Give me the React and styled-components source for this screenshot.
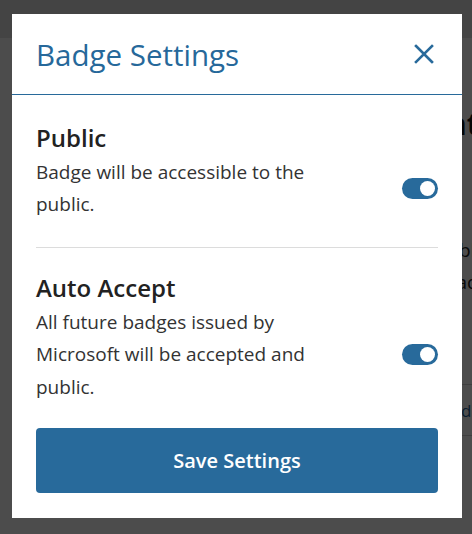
import React, { useState } from 'react'
import styled, { createGlobalStyle } from 'styled-components'

const GlobalStyle = createGlobalStyle`
  html, body {
    margin: 0;
    padding: 0;
    height: 100%;
    overflow: hidden;
    background: #ffffff;
    font-family: "Open Sans", "Noto Sans", Arial, sans-serif;
  }
`;

function Toggle({ on, onChange }) {
  return (
    <Switch type='button' role='switch' aria-checked={on} $on={on} onClick={onChange}>
      <Knob $on={on} />
    </Switch>
  )
}

function SettingItem({ title, text, on, onChange }) {
  return (
    <Item>
      <ItemTitle>{title}</ItemTitle>
      <ItemRow>
        <ItemText>{text}</ItemText>
        <Toggle on={on} onChange={onChange} />
      </ItemRow>
    </Item>
  )
}

function App() {
  const [isPublic, setPublic] = useState(true)
  const [autoAccept, setAutoAccept] = useState(true)

  return (
    <>
      <GlobalStyle />

      {/* page behind the dialog */}
      <Page>
        <TopBar />
        <PageMain>
          <PageHeading>Microsoft Learn achievements and badges earned at all</PageHeading>
          <PageText>Badges you earn are shown here and are available to share with</PageText>
          <PageText>everyone that you choose, and you can download and share them all</PageText>
          <PageTable>
            <PageCell>Issued by Microsoft and shared</PageCell>
          </PageTable>
        </PageMain>
      </Page>

      <Overlay>
        <Dialog role='dialog' aria-labelledby='badge-settings-title'>
          <Header>
            <Title id='badge-settings-title'>Badge Settings</Title>
            <CloseButton type='button' aria-label='Close'>
              <svg width='20' height='20' viewBox='0 0 20 20' fill='none'>
                <path d='M2 2 L18 18 M18 2 L2 18' stroke='currentColor' strokeWidth='2.6' strokeLinecap='square' />
              </svg>
            </CloseButton>
          </Header>

          <Body>
            <SettingItem
              title='Public'
              text='Badge will be accessible to the public.'
              on={isPublic}
              onChange={() => setPublic(!isPublic)}
            />
            <Divider />
            <SettingItem
              title='Auto Accept'
              text='All future badges issued by Microsoft will be accepted and public.'
              on={autoAccept}
              onChange={() => setAutoAccept(!autoAccept)}
            />
            <SaveButton type='button'>Save Settings</SaveButton>
          </Body>
        </Dialog>
      </Overlay>
    </>
  )
}

const Page = styled.div`
  width: 100%;
  height: 100vh;
  overflow: hidden;
`;

const TopBar = styled.div`
  height: 38px;
  background: #e4e4e4;
`;

const PageMain = styled.main`
  padding: 66px 0 0 40px;
`;

const PageHeading = styled.h1`
  margin: 0 0 90px;
  font-size: 30px;
  line-height: 40px;
  font-weight: 700;
  color: #111;
  white-space: nowrap;
`;

const PageText = styled.p`
  margin: 0;
  font-size: 19px;
  line-height: 32px;
  color: #222;
  white-space: nowrap;
`;

const PageTable = styled.div`
  margin-top: 86px;
  border-top: 1px solid #cfcfcf;
  border-bottom: 1px solid #cfcfcf;
  height: 50px;
  display: flex;
  align-items: center;
`;

const PageCell = styled.span`
  font-size: 17px;
  color: #1f5f99;
  white-space: nowrap;
  padding-left: 380px;
`;

const Overlay = styled.div`
  position: fixed;
  inset: 0;
  background: rgba(0, 0, 0, 0.7);
  display: flex;
  justify-content: flex-start;
  align-items: flex-start;
  padding: 14px 0 0 12px;
`;

const Dialog = styled.div`
  width: 450px;
  background: #ffffff;
  display: flex;
  flex-direction: column;
`;

const Header = styled.div`
  height: 81px;
  box-sizing: border-box;
  display: flex;
  align-items: center;
  justify-content: space-between;
  padding: 0 28px 0 24px;
  border-bottom: 1px solid #286a9b;
`;

const Title = styled.h2`
  margin: 0;
  font-size: 29.5px;
  font-weight: 400;
  color: #26689a;
`;

const CloseButton = styled.button`
  border: 0;
  background: transparent;
  padding: 0;
  width: 20px;
  height: 20px;
  color: #286a9b;
  cursor: pointer;
  display: flex;
`;

const Body = styled.div`
  padding: 28px 24px 25px;
  display: flex;
  flex-direction: column;
`;

const Item = styled.div`
  display: flex;
  flex-direction: column;
  gap: 3px;
`;

const ItemTitle = styled.h3`
  margin: 0;
  font-size: 24px;
  line-height: 30px;
  font-weight: 600;
  color: #222;
`;

const ItemRow = styled.div`
  display: flex;
  align-items: center;
  justify-content: space-between;
`;

const ItemText = styled.p`
  margin: 0;
  width: 290px;
  font-size: 19px;
  line-height: 32.4px;
  color: #333;
`;

const Switch = styled.button`
  position: relative;
  width: 36px;
  height: 21px;
  border: 0;
  padding: 0;
  border-radius: 11px;
  background: ${p => (p.$on ? '#286a9b' : '#c4c4c4')};
  cursor: pointer;
  flex: 0 0 auto;
`;

const Knob = styled.span`
  position: absolute;
  top: 3px;
  left: ${p => (p.$on ? '18px' : '3px')};
  width: 15px;
  height: 15px;
  border-radius: 50%;
  background: #ffffff;
`;

const Divider = styled.hr`
  margin: 26px 0 25px;
  border: 0;
  border-top: 1px solid #dcdcdc;
`;

const SaveButton = styled.button`
  margin-top: 25px;
  height: 65px;
  border: 0;
  border-radius: 4px;
  background: #286a9b;
  color: #ffffff;
  font-family: inherit;
  font-size: 20px;
  font-weight: 600;
  cursor: pointer;
`;

export default App
